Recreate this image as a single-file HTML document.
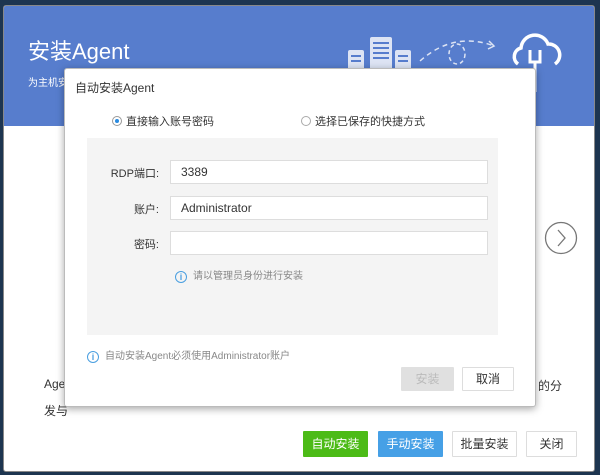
<!DOCTYPE html>
<html><head><meta charset="utf-8"><style>
*{margin:0;padding:0;box-sizing:border-box}
body{width:600px;height:475px;background:#1d3550;position:relative;overflow:hidden;font-family:"Liberation Sans","Noto Sans CJK SC",sans-serif;font-size:12px;color:#333}
.win{position:absolute;left:3px;top:5px;width:592px;height:467px;background:#fff;border:1px solid #888;border-radius:3px;overflow:hidden}
.hdr{position:absolute;left:0;top:0;width:100%;height:120px;background:#577dcd}
.ttl{position:absolute;left:24px;top:28px;color:#fff;font-size:22px}
.sub{position:absolute;left:24px;top:68px;color:#fff;font-size:10px}
.dlg{position:absolute;left:64px;top:68px;width:472px;height:339px;background:#fff;border:1px solid #bbb;border-radius:3px;box-shadow:0 2px 8px rgba(0,0,0,.35)}
.gray{position:absolute;left:22px;top:69px;width:411px;height:197px;background:#f4f4f4}
.inp{position:absolute;left:83px;width:318px;height:24px;background:#fff;border:1px solid #ddd;font-size:12px;padding:4px 10px;color:#333}
.lbl{position:absolute;right:339px;font-size:11px;color:#333;text-align:right}
.btn{position:absolute;height:24px;border:1px solid #ddd;background:#fff;font-size:12px;text-align:center;line-height:22px;border-radius:1px}
.radio{display:inline-block;width:10px;height:10px;border:1px solid #aaa;border-radius:50%;vertical-align:-1px;margin-right:4px;position:relative;background:#fff}
.info{display:inline-block;width:12px;height:12px;border:1px solid #4a9fe0;border-radius:50%;color:#4a9fe0;font-size:9px;line-height:10px;text-align:center;vertical-align:-1px;margin-right:6px;font-weight:bold}
</style></head><body>
<div class="win">
<div class="hdr">
<div class="ttl">安装Agent</div>
<div class="sub">为主机安装</div>
<svg style="position:absolute;left:330px;top:20px" width="260" height="85" viewBox="0 0 260 85">
<g fill="#dde4f4"><rect x="14" y="24" width="16" height="30" rx="2"/><rect x="36" y="11" width="22" height="45" rx="2"/><rect x="61" y="24" width="16" height="30" rx="2"/></g>
<g stroke="#577dcd" stroke-width="2"><line x1="17" y1="30" x2="27" y2="30"/><line x1="17" y1="35" x2="27" y2="35"/><line x1="39" y1="17" x2="55" y2="17"/><line x1="39" y1="22" x2="55" y2="22"/><line x1="39" y1="27" x2="55" y2="27"/><line x1="39" y1="32" x2="55" y2="32"/><line x1="64" y1="30" x2="74" y2="30"/><line x1="64" y1="35" x2="74" y2="35"/></g>
<path d="M86 35 Q120 5 160 20" fill="none" stroke="#dde4f4" stroke-width="1.5" stroke-dasharray="5 4"/>
<path d="M155 15 L160 20 L154 23" fill="none" stroke="#dde4f4" stroke-width="1.5"/>
<ellipse cx="123" cy="28" rx="8" ry="10" fill="none" stroke="#dde4f4" stroke-width="1.5" stroke-dasharray="4 3"/>
<path d="M184 38 a9 9 0 0 1 3 -16 a14 14 0 0 1 27 -4 a11 11 0 0 1 7 20" fill="none" stroke="#fff" stroke-width="3.5"/>
<path d="M196 24 v12 h10 v-12 M201 36 v30" fill="none" stroke="#fff" stroke-width="3"/>
</svg>
</div>
<div style="position:absolute;left:40px;top:371px;font-size:12px;color:#333">Age</div>
<div style="position:absolute;left:534px;top:371px;font-size:12px;color:#333">的分</div>
<div style="position:absolute;left:40px;top:396px;font-size:12px;color:#333">发与</div>
<svg style="position:absolute;left:540px;top:215px" width="34" height="34"><circle cx="17" cy="17" r="15.5" fill="#fff" stroke="#777" stroke-width="1.3"/><path d="M14 9 L21 17 L14 25" fill="none" stroke="#777" stroke-width="1.3"/></svg>
<div class="btn" style="left:299px;top:425px;width:65px;height:26px;background:#4cbb17;border-color:#4cbb17;color:#fff;line-height:24px">自动安装</div>
<div class="btn" style="left:374px;top:425px;width:65px;height:26px;background:#46a0e6;border-color:#46a0e6;color:#fff;line-height:24px">手动安装</div>
<div class="btn" style="left:448px;top:425px;width:65px;height:26px;line-height:24px">批量安装</div>
<div class="btn" style="left:522px;top:425px;width:51px;height:26px;line-height:24px">关闭</div>
</div>
<div class="dlg">
<div style="position:absolute;left:10px;top:10px;font-size:12px;color:#333">自动安装Agent</div>
<div style="position:absolute;left:47px;top:44px;font-size:11px"><span class="radio" style="border-color:#999"><span style="position:absolute;left:2px;top:2px;width:4px;height:4px;border-radius:50%;background:#2a8be0"></span></span>直接输入账号密码</div>
<div style="position:absolute;left:236px;top:44px;font-size:11px"><span class="radio"></span>选择已保存的快捷方式</div>
<div class="gray">
<div class="lbl" style="top:27px">RDP端口:</div>
<div class="inp" style="top:22px">3389</div>
<div class="lbl" style="top:63px">账户:</div>
<div class="inp" style="top:58px">Administrator</div>
<div class="lbl" style="top:98px">密码:</div>
<div class="inp" style="top:93px"></div>
<div style="position:absolute;left:88px;top:129px;font-size:10px;color:#888"><span class="info">i</span>请以管理员身份进行安装</div>
</div>
<div style="position:absolute;left:22px;top:278px;font-size:10px;color:#888"><span class="info">i</span>自动安装Agent必须使用Administrator账户</div>
<div class="btn" style="left:336px;top:298px;width:53px;background:#e0e0e0;border-color:#e0e0e0;color:#bbb">安装</div>
<div class="btn" style="left:397px;top:298px;width:52px">取消</div>
</div>
</body></html>
